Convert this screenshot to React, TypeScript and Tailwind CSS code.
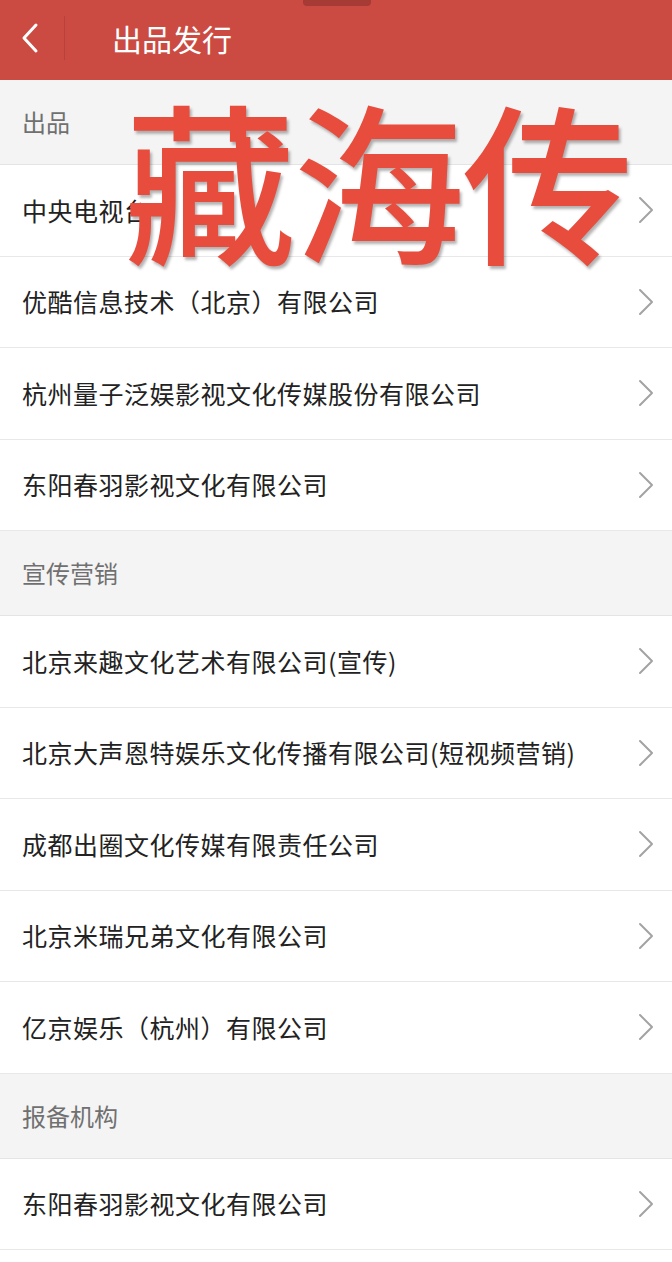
import React from 'react';

const sections = [
  {
    title: '出品',
    items: [
      '中央电视台',
      '优酷信息技术（北京）有限公司',
      '杭州量子泛娱影视文化传媒股份有限公司',
      '东阳春羽影视文化有限公司',
    ],
  },
  {
    title: '宣传营销',
    items: [
      '北京来趣文化艺术有限公司(宣传)',
      '北京大声恩特娱乐文化传播有限公司(短视频营销)',
      '成都出圈文化传媒有限责任公司',
      '北京米瑞兄弟文化有限公司',
      '亿京娱乐（杭州）有限公司',
    ],
  },
  {
    title: '报备机构',
    items: ['东阳春羽影视文化有限公司'],
  },
];

const Chevron = () => (
  <svg width="16" height="28" viewBox="0 0 16 28" fill="none">
    <path d="M2 2 L14 14 L2 26" stroke="#a3a3a3" strokeWidth="2" strokeLinecap="round" strokeLinejoin="round" />
  </svg>
);

const App: React.FC = () => {
  return (
    <div
      className="relative w-[672px] h-[1262px] overflow-hidden bg-white"
      style={{ fontFamily: '"Noto Sans CJK SC", "Noto Sans", sans-serif' }}
    >
      {/* Header */}
      <header className="relative h-[80px] bg-[#cb4b43] flex items-center pb-[4px]">
        <div className="absolute left-[303px] top-0 w-[68px] h-[6px] bg-[#a63a34] rounded-b-[4px]" />
        <div className="w-[64px] flex items-center justify-center">
          <svg width="22" height="32" viewBox="0 0 22 32" fill="none" className="-ml-[4px]">
            <path d="M17 3 L5 16 L17 29" stroke="white" strokeWidth="3" strokeLinecap="round" strokeLinejoin="round" />
          </svg>
        </div>
        <div className="w-px h-[44px] bg-[#b8423b]" />
        <h1 className="ml-[47px] text-[30px] leading-none text-white">出品发行</h1>
      </header>

      {sections.map((s) => (
        <section key={s.title}>
          <div className="h-[85px] bg-[#f4f4f4] border-b border-[#e4e4e4] flex items-center px-[22px] text-[24px] text-[#707070]">
            {s.title}
          </div>
          {s.items.map((it) => (
            <div
              key={it}
              className="h-[91.5px] border-b border-[#e8e8e8] flex items-center justify-between pl-[22px] pr-[18px]"
            >
              <span className="text-[25px] text-[#222] tracking-[0.5px]">{it}</span>
              <Chevron />
            </div>
          ))}
        </section>
      ))}

      {/* Overlay title */}
      <div
        className="absolute left-[124px] top-[90px] text-[172px] font-medium leading-none text-[#e84c3d] tracking-[-3px] whitespace-nowrap"
        style={{ textShadow: '2px 3px 3px rgba(0,0,0,0.3)' }}
      >
        藏海传
      </div>
    </div>
  );
};

export default App;
